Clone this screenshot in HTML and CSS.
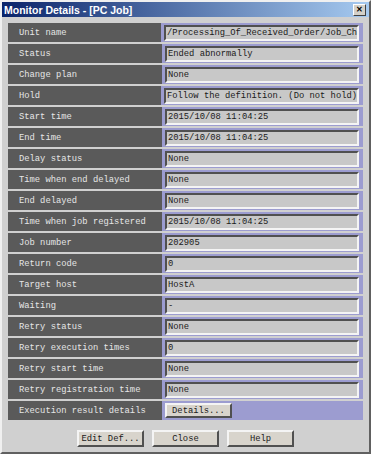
FILE: index.html
```html
<!DOCTYPE html>
<html lang="en">
  <head>
    <meta charset="utf-8">
    <title>Monitor Details - [PC Job]</title>
    <link rel="stylesheet" href="styles.css">
  </head>
  <body>
    <div class="janela">
      <div class="titulo">
        <span>Monitor Details - [PC Job]</span>
        <span class="fechar">&#x2715;</span>
      </div>
      <div class="linhas">
        <div class="linha"><div class="rotulo">Unit name</div><div class="celula"><div class="valor">/Processing_Of_Received_Order/Job_Ch</div></div></div>
        <div class="linha"><div class="rotulo">Status</div><div class="celula"><div class="valor">Ended abnormally</div></div></div>
        <div class="linha"><div class="rotulo">Change plan</div><div class="celula"><div class="valor">None</div></div></div>
        <div class="linha"><div class="rotulo">Hold</div><div class="celula"><div class="valor">Follow the definition. (Do not hold)</div></div></div>
        <div class="linha"><div class="rotulo">Start time</div><div class="celula"><div class="valor">2015/10/08 11:04:25</div></div></div>
        <div class="linha"><div class="rotulo">End time</div><div class="celula"><div class="valor">2015/10/08 11:04:25</div></div></div>
        <div class="linha"><div class="rotulo">Delay status</div><div class="celula"><div class="valor">None</div></div></div>
        <div class="linha"><div class="rotulo">Time when end delayed</div><div class="celula"><div class="valor">None</div></div></div>
        <div class="linha"><div class="rotulo">End delayed</div><div class="celula"><div class="valor">None</div></div></div>
        <div class="linha"><div class="rotulo">Time when job registered</div><div class="celula"><div class="valor">2015/10/08 11:04:25</div></div></div>
        <div class="linha"><div class="rotulo">Job number</div><div class="celula"><div class="valor">202905</div></div></div>
        <div class="linha"><div class="rotulo">Return code</div><div class="celula"><div class="valor">0</div></div></div>
        <div class="linha"><div class="rotulo">Target host</div><div class="celula"><div class="valor">HostA</div></div></div>
        <div class="linha"><div class="rotulo">Waiting</div><div class="celula"><div class="valor">-</div></div></div>
        <div class="linha"><div class="rotulo">Retry status</div><div class="celula"><div class="valor">None</div></div></div>
        <div class="linha"><div class="rotulo">Retry execution times</div><div class="celula"><div class="valor">0</div></div></div>
        <div class="linha"><div class="rotulo">Retry start time</div><div class="celula"><div class="valor">None</div></div></div>
        <div class="linha"><div class="rotulo">Retry registration time</div><div class="celula"><div class="valor">None</div></div></div>
        <div class="linha"><div class="rotulo">Execution result details</div><div class="celula"><button class="botao detalhes">Details...</button></div></div>
      </div>
      <div class="acoes">
        <button class="botao">Edit Def...</button>
        <button class="botao">Close</button>
        <button class="botao">Help</button>
      </div>
    </div>
  </body>
</html>
```

FILE: styles.css
```css
* {
  margin: 0;
  box-sizing: border-box;
}

body {
  background: #fff;
  font-family: "Liberation Mono", monospace;
  font-size: 8.8px;
}

.janela {
  width: 371px;
  height: 454px;
  background: #d0d0d0;
  border: 2px solid;
  border-color: #f0f0f0 #606060 #606060 #f0f0f0;
  display: flex;
  flex-direction: column;
}

.titulo {
  height: 15px;
  background: linear-gradient(to right, #0a246a, #a6caf0);
  color: #fff;
  font-family: "Liberation Sans", sans-serif;
  font-weight: bold;
  font-size: 10.5px;
  display: flex;
  align-items: center;
  justify-content: space-between;
  padding: 0 3px 0 2px;
}

.fechar {
  width: 13px;
  height: 12px;
  background: #d4d0c8;
  color: #000;
  font-size: 8px;
  display: flex;
  align-items: center;
  justify-content: center;
  border: 1px solid;
  border-color: #fff #404040 #404040 #fff;
}

.linhas {
  display: flex;
  flex-direction: column;
  gap: 2px;
  padding: 6px 6px 0 6px;
}

.linha {
  display: flex;
  height: 19px;
}

.rotulo {
  width: 154px;
  background: #5a5a5a;
  color: #e6e6e6;
  padding-left: 11px;
  display: flex;
  align-items: center;
}

.celula {
  flex: 1;
  background: #9c9cd0;
  padding: 2px 4px 1px 3px;
  display: flex;
}

.valor {
  flex: 1;
  background: #c8c8c8;
  color: #1a1a1a;
  border: 2px solid;
  border-color: #505050 #f4f4f4 #f4f4f4 #505050;
  padding-left: 1px;
  white-space: nowrap;
  overflow: hidden;
  display: flex;
  align-items: center;
}

.botao {
  font-family: "Liberation Mono", monospace;
  font-size: 8.8px;
  color: #1a1a1a;
  background: #d8d4cc;
  border: 2px solid;
  border-color: #f4f4f4 #505050 #505050 #f4f4f4;
  width: 67px;
  height: 17px;
  padding: 0;
}

.detalhes {
  height: 15px;
}

.acoes {
  display: flex;
  justify-content: center;
  gap: 8px;
  padding: 10px 0 0 0;
}
```
